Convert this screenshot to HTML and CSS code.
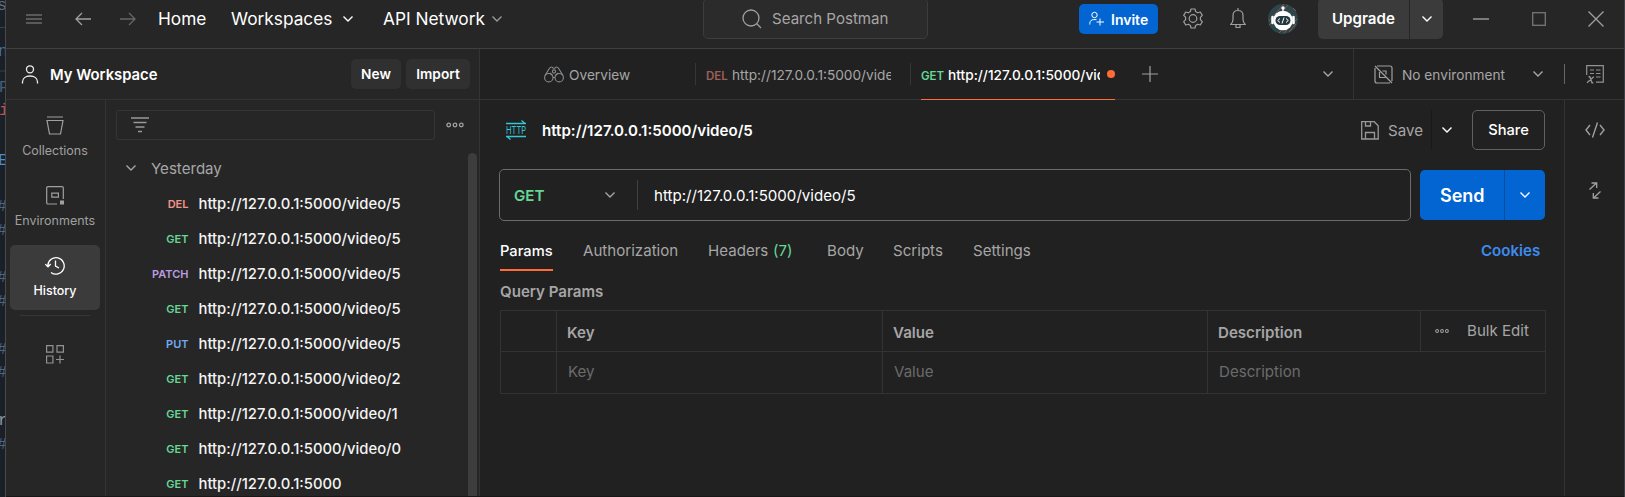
FILE: index.html
```html
<!DOCTYPE html>
<html lang="en">
<head>
<meta charset="utf-8">
<title>Postman</title>
<link rel="stylesheet" href="styles.css">
</head>
<body>
<svg width="0" height="0" class="defs">
  <symbol id="chev" viewBox="0 0 12 8"><path d="M1.500 1.500 6 6l4.500-4.500" fill="none" stroke="currentColor" stroke-width="1.400"/></symbol>
  <symbol id="dots" viewBox="0 0 18 6"><g fill="none" stroke="currentColor" stroke-width="1.300"><circle cx="2.700" cy="3" r="1.800"/><circle cx="9" cy="3" r="1.800"/><circle cx="15.300" cy="3" r="1.800"/></g></symbol>
</svg>
<div class="screen">
  <svg class="editor" width="6" height="497">
    <path d="M0 27.500h6M0 71h6" stroke="#3b414b"/>
    <g font-size="16.500" text-anchor="end">
      <text x="7" y="10" fill="#5d6a78">s</text><text x="8" y="56" fill="#3d73a0">n</text>
      <text x="9" y="92" fill="#46607a">P</text><text x="9" y="115" fill="#c8504f">i</text>
      <text x="8" y="165" fill="#4c8fd0">E</text>
      <g fill="#4c6684"><text x="7" y="211">#</text><text x="7" y="235">#</text><text x="7" y="282">#</text><text x="7" y="306">#</text><text x="7" y="354">#</text><text x="7" y="377">#</text><text x="7" y="449">#</text></g>
      <text x="8" y="425" fill="#8b97a5">r</text>
    </g>
    <path d="M5.500 0v497" stroke="#4a4a4a"/>
  </svg>
  <div class="app">
    <header class="top">
      <svg class="ic menu" width="16" height="10" viewBox="0 0 16 10"><path d="M0 1h16M0 5h16M0 9h16" stroke="#8b8b8b" stroke-width="1.100"/></svg>
      <svg class="ic back" width="16" height="14" viewBox="0 0 16 14"><path d="M16 7H1M7 1 1 7l6 6" fill="none" stroke="#a0a0a0" stroke-width="1.300"/></svg>
      <svg class="ic fwd" width="16" height="14" viewBox="0 0 16 14"><path d="M0 7h15M9 1l6 6-6 6" fill="none" stroke="#666" stroke-width="1.300"/></svg>
      <a class="nav home">Home</a>
      <a class="nav work">Workspaces</a><svg class="ic c1" width="12" height="8"><use href="#chev"/></svg>
      <a class="nav api">API Network</a><svg class="ic c2" width="12" height="8"><use href="#chev"/></svg>
      <div class="search"><svg width="20" height="20" viewBox="0 0 20 20"><g fill="none" stroke="#a0a0a0" stroke-width="1.300"><circle cx="9" cy="9" r="8"/><path d="m14.500 14.500 4.500 4.500"/></g></svg><span>Search Postman</span></div>
      <button class="invite"><svg width="15" height="15" viewBox="0 0 15 15"><g fill="none" stroke="#fff" stroke-width="1"><circle cx="5.500" cy="4" r="2.700"/><path d="M.8 13.500v-1.200c0-2.300 1.800-3.700 4-3.700h2.700M11 7.500v7M7.500 11H15"/></g></svg><span>Invite</span></button>
      <svg class="ic gear" width="20" height="21" viewBox="0 0 20 21"><g fill="none" stroke="#a0a0a0" stroke-width="1.200" stroke-linejoin="round"><path d="M8 1h4l.6 2.600 2.100 1.200 2.600-.8 2 3.400-1.900 1.900v2.400l1.900 1.900-2 3.400-2.600-.8-2.100 1.200L12 20H8l-.6-2.600-2.100-1.200-2.600.8-2-3.400 1.900-1.900V9.300L.7 7.400l2-3.400 2.600.8 2.100-1.200z"/><circle cx="10" cy="10.500" r="3.800"/></g></svg>
      <svg class="ic bell" width="16" height="21" viewBox="0 0 16 21"><g fill="none" stroke="#a0a0a0" stroke-width="1.200"><path d="M8 0v2.500M.8 16.500h14.400c-1.500-1.600-2.200-2.800-2.200-5V7.500C13 4.500 11 2.500 8 2.500s-5 2-5 5v4c0 2.200-.7 3.400-2.200 5zM6 17v2.500h4V17"/></g></svg>
      <svg class="ic avatar" width="30" height="30" viewBox="0 0 30 30"><circle cx="15" cy="15" r="15" fill="#2c464b"/><path d="M1 17 16 0M1 21 5 17M11 29l5-5M16 29l13-14M25 4l3 3M20 1 6 17M21 28l7-8" stroke="#88564c" stroke-width="1"/><circle cx="15" cy="4" r="1.700" fill="#fff"/><path d="M15 4v4" stroke="#fff" stroke-width="1.200"/><circle cx="15" cy="16.500" r="9.800" fill="#fff"/><path d="M4.500 13v6M25.500 13v6" stroke="#fff" stroke-width="2.500" stroke-linecap="round"/><rect x="7.500" y="12" width="15" height="9" rx="4.500" fill="#24383f"/><path d="m12 14.500-2.300 2 2.300 2m6-4 2.300 2-2.300 2m-2-5-2 6" fill="none" stroke="#fff"/></svg>
      <div class="upgrade"><span>Upgrade</span><i><svg width="12" height="8"><use href="#chev"/></svg></i></div>
      <svg class="ic min" width="16" height="2"><path d="M0 1h16" stroke="#a0a0a0" stroke-width="1.400"/></svg>
      <svg class="ic max" width="14" height="14"><rect x=".7" y=".7" width="12.600" height="12.600" fill="none" stroke="#777" stroke-width="1.300"/></svg>
      <svg class="ic close" width="16" height="16"><path d="m.5.5 15 15m0-15-15 15" stroke="#a0a0a0" stroke-width="1.300"/></svg>
    </header>
    <div class="body">
      <aside class="left">
        <div class="wsbar">
          <svg width="18" height="19" viewBox="0 0 18 19"><g fill="none" stroke="#eee" stroke-width="1.300"><circle cx="9" cy="4.300" r="3.500"/><path d="M1.500 18.500V17c0-3.600 3-6 7.500-6s7.500 2.400 7.500 6v1.500"/></g></svg>
          <b class="ws">My Workspace</b><button class="btn new"><span>New</span></button><button class="btn import"><span>Import</span></button>
        </div>
        <div class="cols">
          <nav class="rail">
            <div class="ri"><svg width="18" height="19" viewBox="0 0 18 19"><path d="M1 1h16M1 4.500h16l-2.500 13.500h-11z" fill="none" stroke="currentColor" stroke-width="1.200"/></svg><span class="coll">Collections</span></div>
            <div class="ri"><svg width="18" height="19" viewBox="0 0 18 19"><path d="M11 18H2q-1.300 0-1.300-1.300V2Q.7.700 2 .7h14q1.300 0 1.300 1.300v11" fill="none" stroke="currentColor" stroke-width="1.200"/><path d="M5.800 7.200h6.600v4H5.800z" fill="none" stroke="currentColor" stroke-width="1.200"/><path d="M14 14.500h4v4h-4z" fill="currentColor"/></svg><span class="envs">Environments</span></div>
            <div class="ri on"><svg width="20" height="19" viewBox="0 0 20 19"><path d="M2.800 9.500a8.200 8.200 0 1 1 3.200 6.900M.3 8.200l2.700 2.600L5.700 8M10.500 4.500V10l3.500 2" fill="none" stroke="currentColor" stroke-width="1.300"/></svg><span class="hist">History</span></div>
            <hr>
            <svg class="grid" width="18" height="19" viewBox="0 0 18 19"><path d="M.6.600h6.300v6.500H.6zM11 .6h6.400v6.500H11zM.6 11h6.300v7H.6zM14 10.500v8M10 14.500h8" fill="none" stroke="#929292" stroke-width="1.200"/></svg>
          </nav>
          <div class="history">
            <div class="frow"><div class="filter"><svg width="18" height="16" viewBox="0 0 18 16"><path d="M0 1h18M2.500 5.500h13M4.500 10h9M7 14.500h4" stroke="#999" stroke-width="1.300"/></svg></div><svg class="more" width="18" height="6"><use href="#dots"/></svg></div>
            <div class="scroll">
              <div class="list">
                <div class="yest"><svg width="12" height="8"><use href="#chev"/></svg><span>Yesterday</span></div>
                <div class="row"><b class="del">DEL</b><span>http://127.0.0.1:5000/video/5</span></div>
                <div class="row"><b class="get">GET</b><span>http://127.0.0.1:5000/video/5</span></div>
                <div class="row"><b class="patch">PATCH</b><span>http://127.0.0.1:5000/video/5</span></div>
                <div class="row"><b class="get">GET</b><span>http://127.0.0.1:5000/video/5</span></div>
                <div class="row"><b class="put">PUT</b><span>http://127.0.0.1:5000/video/5</span></div>
                <div class="row"><b class="get">GET</b><span>http://127.0.0.1:5000/video/2</span></div>
                <div class="row"><b class="get">GET</b><span>http://127.0.0.1:5000/video/1</span></div>
                <div class="row"><b class="get">GET</b><span>http://127.0.0.1:5000/video/0</span></div>
                <div class="row"><b class="get">GET</b><span>http://127.0.0.1:5000</span></div>
              </div>
              <div class="bar"></div>
            </div>
          </div>
        </div>
      </aside>
      <main class="main">
        <div class="tabs">
          <div class="tab ov"><svg width="20" height="17" viewBox="0 0 20 17"><g fill="none" stroke="#8b8b8b" stroke-width="1.100"><circle cx="4.800" cy="11.700" r="4.200"/><circle cx="15.200" cy="11.700" r="4.200"/><path d="M1 9.500 5.500 2.300C6.500.7 8.700.6 9.200 2.300h1.600C11.300.6 13.500.7 14.500 2.300L19 9.500M9 11.500h2M8.500 9.500 6 7M11.500 9.500 14 7"/><circle cx="10" cy="5.500" r="1.600"/></g></svg><span>Overview</span></div>
          <i class="sep"></i>
          <div class="tab t2"><b>DEL</b><span>http://127.0.0.1:5000/video/5</span></div>
          <i class="sep"></i>
          <div class="tab t3"><b class="get">GET</b><span>http://127.0.0.1:5000/video/5</span><i class="dot"></i></div>
          <svg class="plus" width="16" height="16"><path d="M0 8h16M8 0v16" stroke="#a0a0a0" stroke-width="1.200"/></svg>
          <svg class="tchev" width="12" height="8"><use href="#chev"/></svg>
          <div class="env"><svg width="19" height="19" viewBox="0 0 19 19"><path d="M3 1h13q2 0 2 2v13M1 3v13q0 2 2 2h13M1 1l17 17M5.500 7v5.500h6M8.500 6H12v3.500" fill="none" stroke="#a0a0a0" stroke-width="1.200"/></svg><span>No environment</span><svg class="echev" width="12" height="8"><use href="#chev"/></svg><i></i><svg class="vars" width="18" height="19" viewBox="0 0 18 19"><path d="M.7 10V.7h16.600v16.500H10M4 5h4M10 5h4.500M4 8.500h4M10 8.500h4.500M10 12h4.500" fill="none" stroke="#929292" stroke-width="1.200"/><path d="M2.500 11.700h1.300l2.200 6H7.300M7.800 11.700 1 17.700" fill="none" stroke="#929292" stroke-width="1.400"/></svg></div>
        </div>
        <div class="content">
          <section class="request">
            <div class="titlebar">
              <svg class="http" width="20" height="20" viewBox="0 0 20 20"><path d="M0 3.500h20M15.500.5l3.500 3M20 16.500H0M4.500 19.500 1 16.500" fill="none" stroke="#35c6d8" stroke-width="1.300"/><text x="0" y="14" textLength="20" lengthAdjust="spacingAndGlyphs" font-size="11" fill="#35c6d8">HTTP</text></svg>
              <b class="title">http://127.0.0.1:5000/video/5</b>
              <svg class="save" width="18" height="19" viewBox="0 0 18 19"><path d="M.7.700h12.500l4 4v13.300h-16.500zM4.500 1v4h5V1M4.500 17.500v-6h9v6" fill="none" stroke="#999" stroke-width="1.300"/></svg><span class="savet">Save</span><i></i>
              <svg class="schev" width="12" height="8"><use href="#chev"/></svg><button class="share"><span>Share</span></button>
            </div>
            <div class="urlbar"><div class="urlbox"><b>GET</b><svg width="12" height="8"><use href="#chev"/></svg><i></i><span>http://127.0.0.1:5000/video/5</span></div><div class="send"><b>Send</b><i><svg width="12" height="8"><use href="#chev"/></svg></i></div></div>
            <div class="subtabs"><span class="params">Params</span><span class="auth">Authorization</span><span class="head">Headers</span><span class="seven">(7)</span><span class="bod">Body</span><span class="scr">Scripts</span><span class="sett">Settings</span><b class="cook">Cookies</b></div>
            <h2>Query Params</h2>
            <div class="table">
              <div></div><div><b class="k">Key</b></div><div><b class="v">Value</b></div><div><b class="d">Description</b></div><div class="bulk"><svg width="14" height="6" viewBox="0 0 18 6"><use href="#dots"/></svg><span>Bulk Edit</span></div>
              <div></div><div class="ph">Key</div><div class="ph">Value</div><div class="ph wide">Description</div>
            </div>
          </section>
          <aside class="right">
            <svg width="20" height="16" viewBox="0 0 20 16"><path d="M5 3 1 8l4 5M15 3l4 5-4 5M12.500.5l-5 15" fill="none" stroke="#a0a0a0" stroke-width="1.400"/></svg>
            <svg width="12" height="17" viewBox="0 0 12 17"><path d="M.5 7.500 7.500 1M2.500 1h5.200v5M11.500 9.500 4.500 16M4.300 11v5h5.200" fill="none" stroke="#a0a0a0" stroke-width="1.300"/></svg>
          </aside>
        </div>
      </main>
    </div>
  </div>
  <div class="edge"></div>
</div>
</body>
</html>
```
FILE: styles.css
```css
*{box-sizing:border-box}
body{margin:0;background:#212121;font:15.100px/20px Inter,"Liberation Sans",sans-serif;color:#a6a6a6;overflow:hidden}
.defs{position:absolute}
svg{flex:none;display:block}
button{border:0;font:inherit;padding:0}
span,b,a{white-space:nowrap}
span,b{padding-top:2px}
b{font-weight:600}
.screen{display:flex;width:1625px;height:497px}
.editor{background:#1b1f27;font-family:"Liberation Mono",monospace}
.app{width:1618px;border-bottom:1px solid #171717}
.edge{width:1px;background:#3f4146}
.top{height:49px;background:#262626;border-bottom:1px solid #404040;display:flex;align-items:center;padding-bottom:11px}
.menu{margin-left:20px}.back{margin-left:33px}.fwd{margin-left:29px}
.nav{color:#fff;font-size:17.300px;flex:none;padding-top:1px}
.home{width:48px;margin-left:22px}.work{width:101px;margin-left:25px}.api{width:101px;margin-left:29px}
.c1{margin-left:10px;color:#fff}.c2{margin-left:7px;color:#999}
.search{width:225px;height:41px;margin:0 0 0 200px;border:1px solid #3d3d3d;border-radius:5px;background:#2b2b2b;display:flex;align-items:center;padding-left:38px;flex:none}
.search span{margin-left:10px;padding-top:0}
.invite{width:79px;height:30px;margin-left:151px;border-radius:5px;background:#0265d2;color:#fff;display:flex;align-items:center;padding-left:10px;font-weight:600;font-size:14px;flex:none}
.invite span{margin-left:7px}
.gear{margin-left:25px}.bell{margin-left:27px}.avatar{margin-left:22px}
.upgrade{width:125px;height:41px;margin-left:20px;border-radius:5px;background:#3b3b3b;color:#fff;font-weight:600;display:flex;align-items:center;flex:none}
.upgrade span{width:91px;padding:0 0 0 14px}
.upgrade i{border-left:1px solid #262626;height:41px;width:34px;display:flex;align-items:center;justify-content:center}
.min{margin-left:30px}.max{margin-left:43px}.close{margin-left:42px}
.body{display:flex;height:447px}
.left{width:474px;background:#262626;border-right:1px solid #333}
.wsbar{height:51px;border-bottom:1px solid #333;display:flex;align-items:center;padding-left:15px}
.ws{color:#fff;margin-left:11px;width:301px;font-size:14.800px}
.btn{height:30px;border-radius:5px;background:#303030;color:#fff;font-weight:600;font-size:13.700px}
.new{width:50px}.import{width:64px;margin-left:5px}
.cols{display:flex;height:396px}
.rail{width:100px;border-right:1px solid #333;padding:5px 5px 0 4px}
.ri{height:65px;width:90px;border-radius:5px;display:flex;flex-direction:column;align-items:center;padding-top:11px;margin-bottom:5px;font-size:12.500px;color:#a0a0a0}
.ri span{margin-top:4px}
.ri.on{background:#3b3b3b;color:#fff;font-weight:500}
.rail hr{width:70px;border:0;border-top:1px solid #363636;margin:5px 10px 29px}
.grid{margin-left:36px}
.history{flex:1}
.frow{display:flex;align-items:center;padding:10px 0 0 10px}
.filter{width:319px;height:30px;border:1px solid #353535;border-radius:3px;display:flex;align-items:center;padding-left:14px}
.more{margin-left:11px;color:#a0a0a0}
.scroll{display:flex;padding-top:13px}
.list{width:352px;height:343px;overflow:hidden;padding-left:9px}
.yest{height:32px;display:flex;align-items:center;padding-bottom:2px}
.yest span{margin-left:14px}
.yest svg{margin-left:10px}
.row{height:35px;display:flex;align-items:center;color:#f4f4f4;font-weight:500;font-size:14.800px}
.row b{width:73.500px;text-align:right;font-size:11px;margin-right:10px;padding-top:3px;flex:none}
.del{color:#f0948a}.get{color:#65d896}.patch{color:#b99de0}.put{color:#72a9f5}
.bar{width:9px;margin-left:10px;height:343px;border-radius:5px 5px 0 0;background:#3d3d3d}
.main{width:1144px}
.tabs{height:51px;display:flex;align-items:center;border-bottom:1px solid #333}
.tab{display:flex;align-items:center;flex:none;height:51px;font-size:13.700px}
.ov{width:151px;margin-left:64px}
.ov span{margin-left:5px}
.sep{width:1px;height:22px;background:#363636}
.tab b{font-size:11.500px;padding-top:3px;width:26px;flex:none}
.tab.t3 b{width:27px}
.t2{margin-left:10px;width:204px}
.t2 b{color:#9c605a}
.t2 span{width:159px;overflow:hidden}
.t3{margin-left:10px;width:194px;border-bottom:1px solid #ff6c37;padding-top:1px;color:#fff;font-weight:500}
.t3 span{width:154px;overflow:hidden}
.dot{width:8px;height:8px;border-radius:50%;background:#ff6c37;margin-left:7px}
.plus{margin-left:27px}.tchev{margin-left:164px}
.env{border-left:1px solid #333;height:50px;margin-left:19px;display:flex;align-items:center;width:270px;padding-left:20px;font-size:13.700px}
.env span{margin-left:9px;width:130px}
.env i{width:1px;height:20px;background:#666;margin:0 21px 0 20px}
.content{display:flex;height:396px}
.request{width:1085px;padding:10px 0 0 20px;border-right:1px solid #333}
.titlebar{display:flex;align-items:center;height:40px}
.http{margin-left:6px}
.title{color:#fff;margin-left:16px;width:819px}
.savet{margin-left:9px;width:43px}
.titlebar i{width:1px;height:40px;background:#191919}
.schev{margin:0 19px 0 9px;color:#fff}
.share{width:73px;height:40px;border:1px solid #606060;border-radius:5px;background:none;color:#fff;font-weight:500;font-size:14.700px}
.urlbar{display:flex;align-items:center;margin:19px 0 0 -1px}
.urlbox{width:912px;height:52px;border:1px solid #6b6b6b;border-radius:5px;display:flex;align-items:center;padding-left:14px}
.urlbox b{width:90px;color:#65d896}
.urlbox i{height:30px;width:1px;background:#404040;margin:0 16px 0 21px}
.urlbox span{color:#fff}
.send{width:125px;height:50px;margin-left:9px;background:#0265d2;border-radius:5px;color:#fff;display:flex;align-items:center}
.send b{width:84px;padding-left:20px;font-size:18px}
.send i{width:41px;height:50px;border-left:1px solid #084e9f;display:flex;align-items:center;justify-content:center}
.subtabs{display:flex;height:49px;align-items:center;padding-top:8px}
.subtabs span{flex:none}
.subtabs .params{width:53px;height:42px;color:#fff;font-weight:500;border-bottom:2px solid #ff6c37;padding-top:12px;font-size:14.700px}
.auth{width:95px;margin-left:30px}.head{width:60px;margin-left:30px}.seven{width:19px;margin-left:5px;color:#65d896}.bod{width:36px;margin-left:35px}.scr{width:49px;margin-left:30px}.sett{width:58px;margin-left:31px}
.cook{color:#3d8cf0;margin-left:450px}
h2{margin:0;height:40px;padding-top:12px;font-size:15.100px;line-height:20px;font-weight:600}
.table{display:grid;grid-template-columns:56px 326px 325px 213px 125px;grid-template-rows:41px 42px;width:1046px;border-left:1px solid #333;border-bottom:1px solid #333}
.table>div{border-top:1px solid #333;border-right:1px solid #333;padding:12px 0 0 10px}
.table .ph{color:#6b6b6b;padding:10px 0 0 11px}
.table .wide{grid-column:span 2}
.table .bulk{display:flex;align-items:center;padding:0 0 0 14px}
.table .bulk span{padding:0;margin-left:18px}
.right{width:59px;padding-top:22px;display:flex;flex-direction:column;align-items:center;gap:44px}
```
